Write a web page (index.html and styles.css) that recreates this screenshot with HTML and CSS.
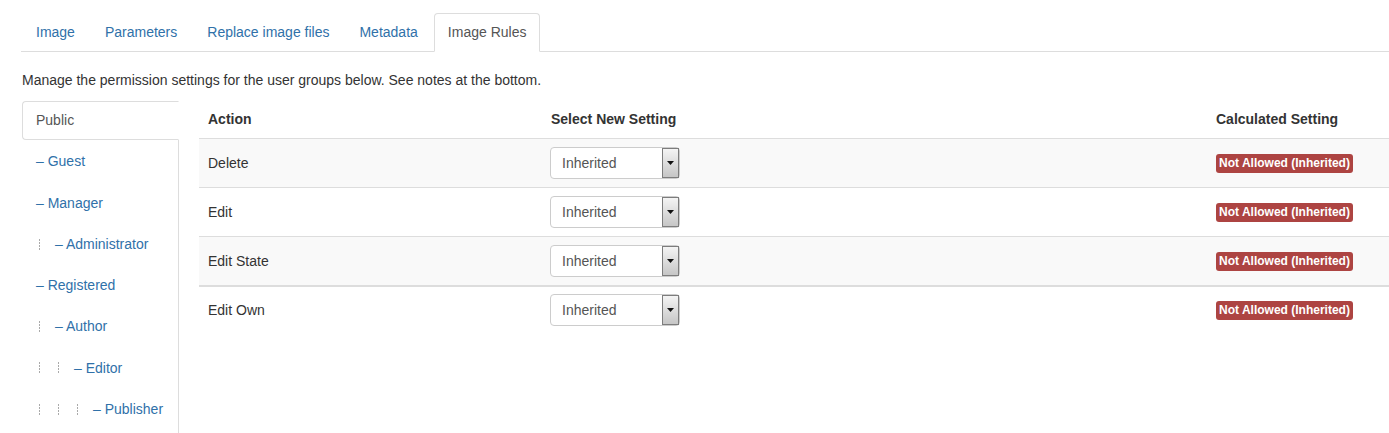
FILE: index.html
```html
<!DOCTYPE html>
<html lang="en">
<head>
<meta charset="utf-8">
<title>Image Rules</title>
<link rel="stylesheet" href="styles.css">
</head>
<body>
<div class="page">
  <ul class="tabs">
    <li><a class="tab-link" href="#">Image</a></li>
    <li><a class="tab-link" href="#">Parameters</a></li>
    <li><a class="tab-link" href="#">Replace image files</a></li>
    <li><a class="tab-link" href="#">Metadata</a></li>
    <li><a class="tab-link active" href="#">Image Rules</a></li>
  </ul>
  <p class="intro">Manage the permission settings for the user groups below. See notes at the bottom.</p>
  <div class="rules">
    <ul class="groups">
      <li><a class="group-link active" href="#">Public</a></li>
      <li><a class="group-link" href="#">– Guest</a></li>
      <li><a class="group-link" href="#">– Manager</a></li>
      <li><a class="group-link" href="#"><span class="level"></span>– Administrator</a></li>
      <li><a class="group-link" href="#">– Registered</a></li>
      <li><a class="group-link" href="#"><span class="level"></span>– Author</a></li>
      <li><a class="group-link" href="#"><span class="level"></span><span class="level"></span>– Editor</a></li>
      <li><a class="group-link" href="#"><span class="level"></span><span class="level"></span><span class="level"></span>– Publisher</a></li>
    </ul>
    <table class="perm">
      <colgroup>
        <col class="col-action">
        <col class="col-select">
        <col>
      </colgroup>
      <thead>
        <tr>
          <th>Action</th>
          <th>Select New Setting</th>
          <th>Calculated Setting</th>
        </tr>
      </thead>
      <tbody>
        <tr class="odd">
          <td>Delete</td>
          <td><div class="select"><span class="select-value">Inherited</span><span class="select-arrow"><svg width="7" height="4" viewBox="0 0 7 4"><path d="M0 0H7L3.5 4Z" fill="#111"/></svg></span></div></td>
          <td><span class="badge">Not Allowed (Inherited)</span></td>
        </tr>
        <tr>
          <td>Edit</td>
          <td><div class="select"><span class="select-value">Inherited</span><span class="select-arrow"><svg width="7" height="4" viewBox="0 0 7 4"><path d="M0 0H7L3.5 4Z" fill="#111"/></svg></span></div></td>
          <td><span class="badge">Not Allowed (Inherited)</span></td>
        </tr>
        <tr class="odd split">
          <td>Edit State</td>
          <td><div class="select"><span class="select-value">Inherited</span><span class="select-arrow"><svg width="7" height="4" viewBox="0 0 7 4"><path d="M0 0H7L3.5 4Z" fill="#111"/></svg></span></div></td>
          <td><span class="badge">Not Allowed (Inherited)</span></td>
        </tr>
        <tr class="last">
          <td>Edit Own</td>
          <td><div class="select"><span class="select-value">Inherited</span><span class="select-arrow"><svg width="7" height="4" viewBox="0 0 7 4"><path d="M0 0H7L3.5 4Z" fill="#111"/></svg></span></div></td>
          <td><span class="badge">Not Allowed (Inherited)</span></td>
        </tr>
      </tbody>
    </table>
  </div>
</div>
</body>
</html>
```
FILE: styles.css
```css
html, body {
  margin: 0;
  padding: 0;
  background: #fff;
}
body {
  font-family: "Liberation Sans", Arial, sans-serif;
  font-size: 14px;
  color: #333;
  overflow: hidden;
}
.page {
  padding: 13px 0 0 21px;
}
.tabs {
  display: flex;
  list-style: none;
  margin: 0;
  padding: 0 0 0 1px;
  border-bottom: 1px solid #ddd;
}
.tab-link {
  display: block;
  padding: 8px 13px 9px;
  line-height: 20px;
  border: 1px solid transparent;
  border-radius: 4px 4px 0 0;
  margin-right: 2px;
  margin-bottom: -1px;
  color: #3071a9;
  text-decoration: none;
}
.tab-link.active {
  border-color: #ddd #ddd transparent;
  background: #fff;
  color: #555;
}
.intro {
  margin: 18px 0 11px 1px;
  line-height: 20px;
}
.rules {
  display: flex;
  align-items: stretch;
  min-height: 340px;
}
.groups {
  flex: none;
  width: 156px;
  list-style: none;
  margin: 0 20px 0 1px;
  padding: 0;
  border-right: 1px solid #ddd;
}
.group-link {
  display: flex;
  align-items: center;
  padding: 9px 13px;
  line-height: 19.3px;
  border: 1px solid transparent;
  border-radius: 4px 0 0 4px;
  margin-right: -1px;
  margin-bottom: 2px;
  color: #3071a9;
  text-decoration: none;
}
.group-link.active {
  border-color: #ddd transparent #ddd #ddd;
  background: #fff;
  color: #555;
}
.level {
  flex: none;
  width: 19px;
  height: 12px;
}
.level::before {
  content: "";
  display: block;
  width: 1px;
  height: 12px;
  margin-left: 3px;
  background: repeating-linear-gradient(to bottom, #aaa 0 2px, transparent 2px 3px);
}
.perm {
  flex: 1;
  align-self: flex-start;
  border-collapse: collapse;
  table-layout: fixed;
}
.col-action {
  width: 343px;
}
.col-select {
  width: 665px;
}
.perm th,
.perm td {
  padding: 8px 9px;
  text-align: left;
  vertical-align: middle;
  line-height: 20px;
}
.perm th {
  padding-bottom: 9px;
  font-weight: bold;
  border-bottom: 1px solid #ddd;
}
.perm td {
  border-bottom: 1px solid #ddd;
}
.perm tr.odd td {
  background: #f9f9f9;
}
.perm tr.split td {
  border-bottom-width: 2px;
}
.perm tr.last td {
  border-bottom: none;
  padding-top: 7px;
}
.select {
  display: flex;
  box-sizing: border-box;
  width: 130px;
  height: 32px;
  margin-left: -1px;
  border: 1px solid #ccc;
  border-radius: 4px;
  background: #fff;
}
.select-value {
  flex: 1;
  padding-left: 11px;
  line-height: 30px;
  color: #555;
}
.select-arrow {
  flex: none;
  box-sizing: border-box;
  width: 17px;
  border: 1px solid #7d7d7d;
  background: linear-gradient(#f4f4f4, #c6c6c6);
  display: flex;
  align-items: center;
  justify-content: center;
}
.badge {
  display: inline-block;
  vertical-align: middle;
  background: #ad4442;
  color: #fff;
  font-weight: bold;
  font-size: 12px;
  line-height: 19px;
  padding: 0 3px;
  border-radius: 3px;
}
```
